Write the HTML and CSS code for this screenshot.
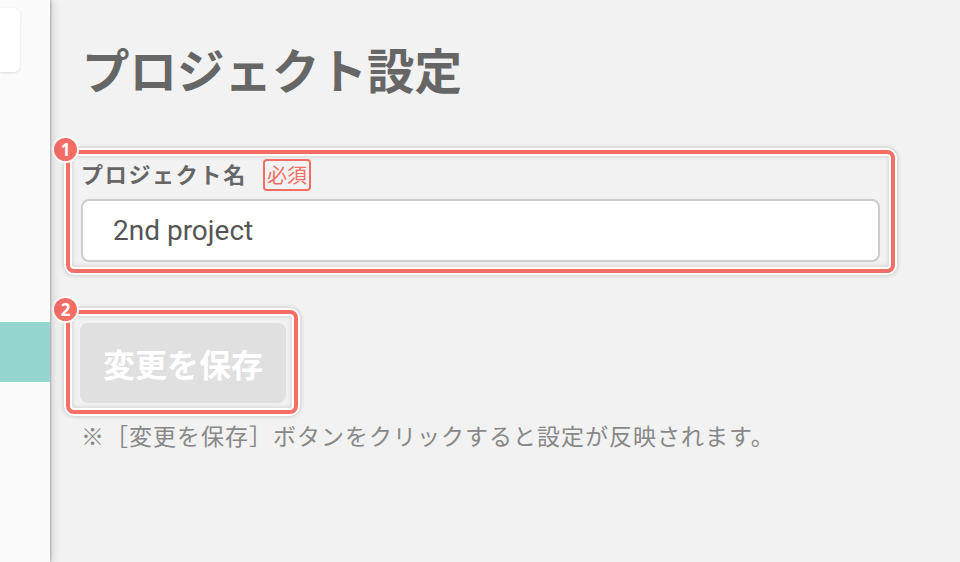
FILE: index.html
```html
<!DOCTYPE html>
<html lang="ja">
<head>
<meta charset="utf-8">
<title>プロジェクト設定</title>
<link rel="stylesheet" href="styles.css">
</head>
<body>
<div class="app">
  <aside class="sidebar">
    <div class="side-card"></div>
    <div class="side-active"></div>
  </aside>
  <main class="main">
    <h1 class="title">プロジェクト設定</h1>
    <div class="hl hl-field">
      <span class="num">1</span>
      <div class="label-row">
        <span class="label">プロジェクト名</span>
        <span class="required">必須</span>
      </div>
      <div class="input">2nd project</div>
    </div>
    <div class="hl hl-btn">
      <span class="num">2</span>
      <button class="save" type="button">変更を保存</button>
    </div>
    <p class="note">※［変更を保存］ボタンをクリックすると設定が反映されます。</p>
  </main>
</div>
</body>
</html>
```

FILE: styles.css
```css
html, body {
  margin: 0;
  padding: 0;
  height: 100%;
}
body {
  font-family: "Noto Sans CJK JP", "Noto Sans", sans-serif;
  background: #f2f2f2;
  overflow: hidden;
}
.app {
  display: flex;
  height: 562px;
}
.sidebar {
  width: 50px;
  flex: none;
  background: #fbfbfb;
  position: relative;
  z-index: 2;
  box-shadow: 1px 0 2px rgba(0,0,0,0.25), 3px 0 10px rgba(0,0,0,0.12);
  display: flex;
  flex-direction: column;
  padding-top: 8px;
  box-sizing: border-box;
}
.side-card {
  width: 20px;
  height: 64px;
  background: #fff;
  border-radius: 0 6px 6px 0;
  box-shadow: 0 1px 3px rgba(0,0,0,0.12);
}
.side-active {
  margin-top: 250px;
  height: 60px;
  background: #93d5cf;
}
.main {
  flex: 1;
  padding: 45px 65px 0 16px;
  box-sizing: border-box;
}
.title {
  margin: 0 0 58px 16px;
  font-size: 47.5px;
  line-height: 47px;
  font-weight: 700;
  color: #666;
}
.hl {
  position: relative;
  border: 4px solid #f46e65;
  border-radius: 8px;
  box-shadow: 0 0 0 2px #fff, 0 0 5px 2px rgba(0,0,0,0.22),
    inset 0 0 0 2px #fff, inset 0 0 5px 2px rgba(0,0,0,0.16);
}
.num {
  position: absolute;
  left: -18px;
  top: -18px;
  width: 23px;
  height: 23px;
  border: 2px solid #fff;
  border-radius: 50%;
  background: #f46e65;
  color: #fff;
  font-family: "Noto Sans", sans-serif;
  font-weight: 700;
  font-size: 17px;
  line-height: 23px;
  text-align: center;
}
.hl-field {
  padding: 5px 11px 7px 11px;
}
.label-row {
  display: flex;
  align-items: center;
  height: 32px;
  margin-bottom: 8px;
}
.label {
  font-size: 22px;
  letter-spacing: 1.7px;
  font-weight: 700;
  color: #666;
  line-height: 1;
  margin-top: -4px;
}
.required {
  margin-left: 16px;
  border: 2px solid #f46e65;
  border-radius: 4px;
  color: #f46e65;
  font-size: 20px;
  line-height: 28px;
  padding: 0 2px;
}
.input {
  height: 63px;
  box-sizing: border-box;
  background: #fff;
  border: 2px solid #cdcdcd;
  border-radius: 8px;
  padding-left: 30px;
  font-family: Roboto, "Noto Sans", sans-serif;
  font-size: 28px;
  line-height: 59px;
  color: #555;
}
.hl-btn {
  display: inline-block;
  margin-top: 37px;
  padding: 9px 8px 7px 10px;
}
.save {
  display: block;
  width: 206px;
  height: 80px;
  border: none;
  border-radius: 8px;
  background: #e0e0e0;
  color: #fff;
  font-family: "Noto Sans CJK JP", sans-serif;
  font-size: 32px;
  font-weight: 700;
  padding: 0;
}
.note {
  margin: 5px 0 0 15px;
  font-size: 23px;
  letter-spacing: 1px;
  line-height: 32px;
  color: #888;
}
```
